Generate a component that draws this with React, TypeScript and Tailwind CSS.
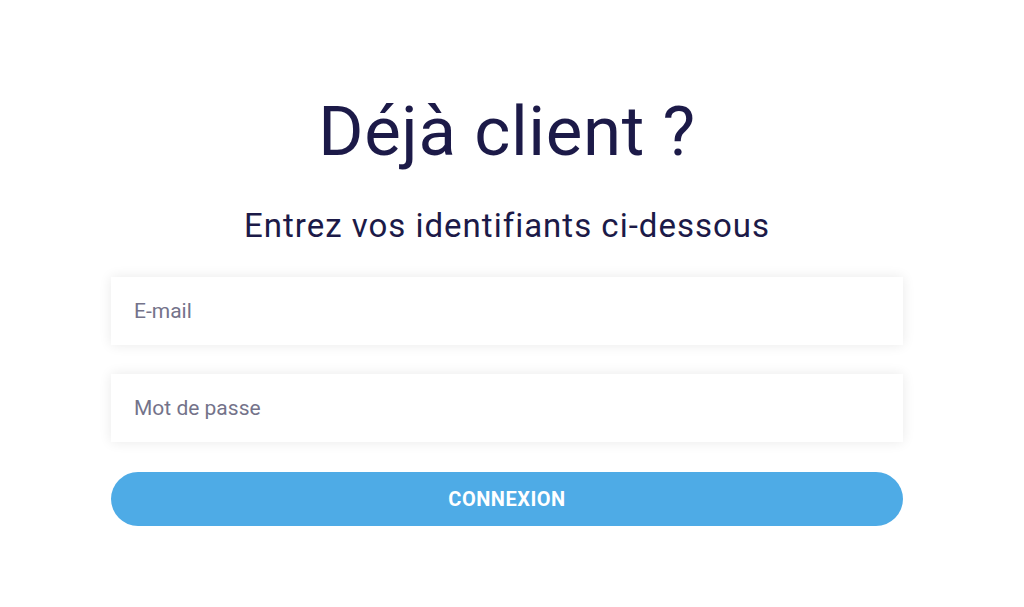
import React from "react";

export default function App() {
  return (
    <div
      className="w-[1024px] h-[607px] bg-white overflow-hidden"
      style={{ fontFamily: "Roboto, 'Liberation Sans', sans-serif" }}
    >
      <div className="ml-[111px] w-[792px] pt-[97px] flex flex-col">
        <h1 className="text-center text-[69px] leading-none font-normal tracking-[0.6px] text-[#1c1a48]">
          Déjà client ?
        </h1>
        <p className="mt-[43px] text-center text-[33px] leading-none tracking-[1px] text-[#1c1a48]">
          Entrez vos identifiants ci-dessous
        </p>
        <div className="mt-[35px] flex flex-col gap-[29px]">
          <input
            type="email"
            placeholder="E-mail"
            className="h-[68px] w-full bg-white px-[23px] text-[21px] text-[#1c1a48] placeholder:text-[#74738a] outline-none shadow-[0_0_12px_rgba(0,0,0,0.09)]"
          />
          <input
            type="password"
            placeholder="Mot de passe"
            className="h-[68px] w-full bg-white px-[23px] text-[21px] text-[#1c1a48] placeholder:text-[#74738a] outline-none shadow-[0_0_12px_rgba(0,0,0,0.09)]"
          />
        </div>
        <button className="mt-[30px] h-[54px] w-full rounded-full bg-[#4eabe6] text-white text-[20px] font-bold tracking-[0.5px]">
          CONNEXION
        </button>
      </div>
    </div>
  );
}
